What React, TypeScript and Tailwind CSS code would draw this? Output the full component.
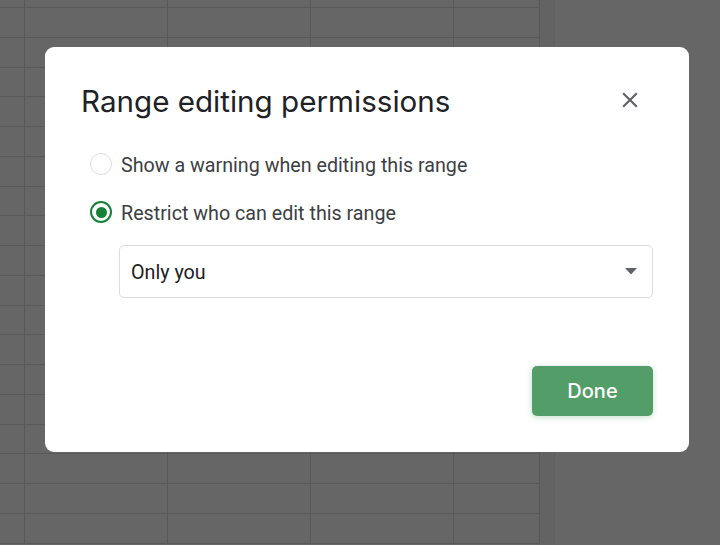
import React from 'react';

const ROWS = Array.from({ length: 18 });
const COLS = [25, 143, 143, 143, 86];

function Radio({ checked }: { checked: boolean }) {
  if (checked) {
    return (
      <span className="w-[22px] h-[22px] rounded-full border-[2.5px] border-[#188038] flex items-center justify-center shrink-0">
        <span className="w-[11px] h-[11px] rounded-full bg-[#188038]" />
      </span>
    );
  }
  return <span className="w-[22px] h-[22px] rounded-full border-[1.5px] border-[#dadce0] shrink-0" />;
}

function SheetRow({ h }: { h: number }) {
  return (
    <div className="flex shrink-0 border-b border-[#595959]" style={{ height: h }}>
      {COLS.map((w, c) => (
        <div key={c} className="h-full border-r border-[#595959] shrink-0" style={{ width: w }} />
      ))}
    </div>
  );
}

export default function App() {
  return (
    <div className="relative w-[720px] h-[545px] overflow-hidden bg-[#666666]">
      {/* dimmed sheet behind the dialog */}
      <div className="flex h-full">
        <div className="w-[540px] flex flex-col">
          <SheetRow h={8} />
          {ROWS.map((_, r) => (
            <SheetRow key={r} h={29.75} />
          ))}
        </div>
        <div className="w-[15px] h-full bg-[#636363] border-r border-[#5f5f5f]" />
        <div className="flex-1" />
      </div>

      <div
        className="absolute left-[45px] top-[47px] w-[644px] h-[405px] bg-white rounded-[9px] flex flex-col pl-[36px] pr-[36px] pb-[36px]"
        style={{ fontFamily: 'Roboto, "Liberation Sans", sans-serif' }}
      >
        <div className="flex items-center justify-between h-[108px]">
          <h1
            className="text-[29.6px] text-[#202124] tracking-[0px] pt-[1px]"
            style={{ fontFamily: 'Inter, Lato, sans-serif' }}
          >
            Range editing permissions
          </h1>
          <svg width="26" height="26" viewBox="0 0 24 24" className="mr-[10px] mt-[-2px]" fill="#5f6368">
            <path d="M19 6.41L17.59 5 12 10.59 6.41 5 5 6.41 10.59 12 5 17.59 6.41 19 12 13.41 17.59 19 19 17.59 13.41 12z" />
          </svg>
        </div>

        <div className="flex flex-col pl-[9px] gap-[26px] -mt-[2px]">
          <label className="flex items-center gap-[9px] h-[22px] text-[19.7px] text-[#3c4043]">
            <Radio checked={false} />
            <span className="pt-[3px]">Show a warning when editing this range</span>
          </label>
          <label className="flex items-center gap-[9px] h-[22px] text-[19.7px] text-[#3c4043]">
            <Radio checked />
            <span className="pt-[3px]">Restrict who can edit this range</span>
          </label>
        </div>

        <div className="ml-[38px] mt-[22px] h-[53px] rounded-[5px] border border-[#dadce0] flex items-center justify-between pl-[11px] pr-[16px]">
          <span className="text-[19.7px] text-[#202124] pt-[2px]">Only you</span>
          <svg width="12" height="7" viewBox="0 0 12 7" fill="#5f6368" className="mr-[-1px]">
            <path d="M0 0h12L6 6.5z" />
          </svg>
        </div>

        <div className="flex-1" />
        <div className="flex justify-end">
          <button
            className="w-[121px] h-[50px] rounded-[5px] bg-[#539e68] text-white text-[20px] font-medium shadow-[0_1px_6px_rgba(83,158,104,0.35)]"
            style={{ fontFamily: 'Inter, Lato, sans-serif' }}
          >
            Done
          </button>
        </div>
      </div>
    </div>
  );
}
